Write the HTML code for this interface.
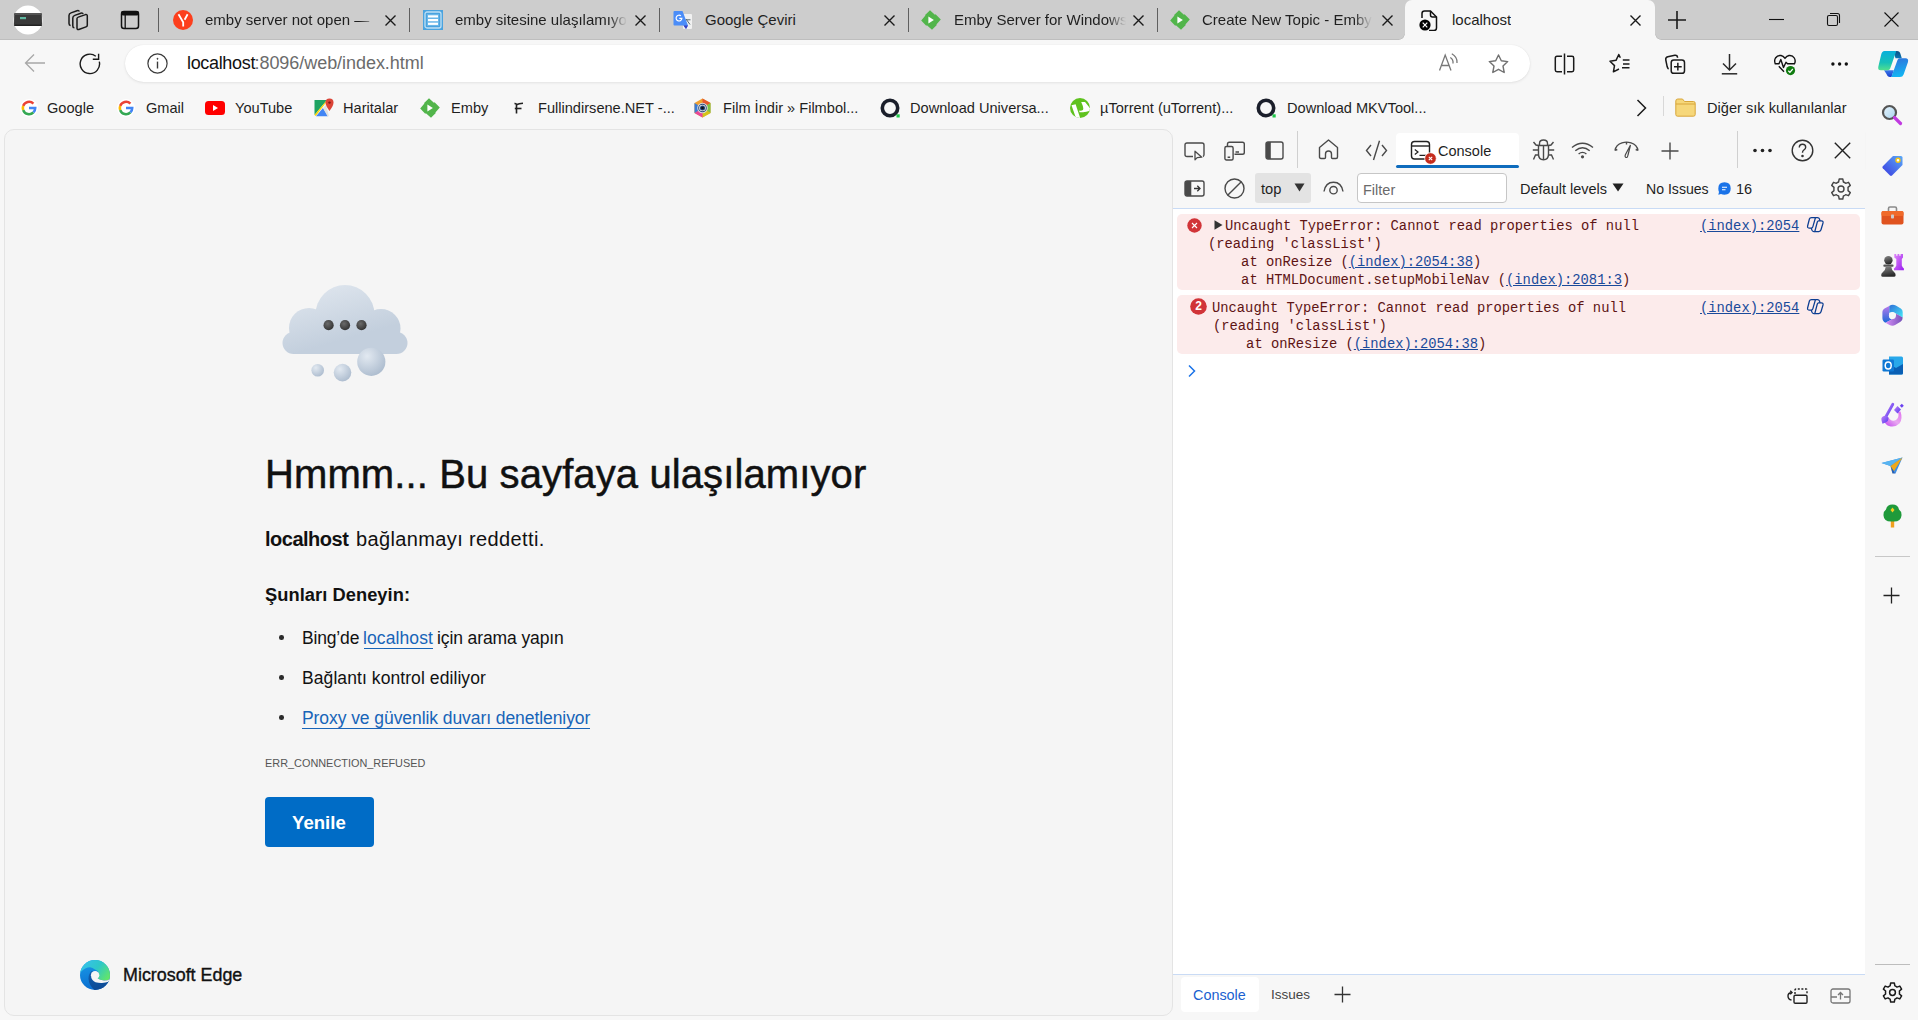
<!DOCTYPE html>
<html><head><meta charset="utf-8">
<style>
*{box-sizing:border-box;margin:0;padding:0}
html,body{width:1918px;height:1020px;overflow:hidden;background:#f7f7f7;font-family:"Liberation Sans",sans-serif;color:#1a1a1a}
.a{position:absolute}
#tabstrip{left:0;top:0;width:1918px;height:40px;background:#cdcdcd;border-bottom:1px solid #bebebe}
.tsep{position:absolute;top:8px;width:1px;height:24px;background:#5f5f5f}
.ttl{position:absolute;top:10px;font-size:15px;line-height:20px;white-space:nowrap;overflow:hidden;color:#1f1f1f}
.fade{-webkit-mask-image:linear-gradient(to right,#000 calc(100% - 18px),transparent)}
.bm{position:absolute;top:98px;font-size:14.6px;line-height:20px;white-space:nowrap;color:#1f1f1f}
#card{left:4px;top:129px;width:1169px;height:887px;background:#f5f5f5;border:1px solid #e4e4e4;border-radius:10px}
#dev{left:1173px;top:129px;width:692px;height:891px;background:#fff}
.mono{font-family:"Liberation Mono",monospace;font-size:13.8px;line-height:18px;white-space:pre}
.ui{font-size:15px;line-height:20px;white-space:nowrap;color:#1f1f1f}
</style></head><body>

<div id="tabstrip" class="a"></div>
<!-- profile -->
<svg class="a" style="left:13px;top:5px" width="30" height="30" viewBox="0 0 30 30">
 <circle cx="15" cy="15" r="14.5" fill="#fff"/>
 <path d="M1.2 9 L28.8 9 L29 19 Q29 21 27 21 L3 21 Q1 21 1 19 Z" fill="#3a3a3a"/>
 <rect x="1.2" y="8" width="27.6" height="2" fill="#555"/>
 <rect x="7" y="12" width="6" height="2.2" fill="#5fb7a0"/>
 <rect x="1.2" y="19.5" width="27.6" height="1.5" fill="#222"/>
</svg>
<!-- workspaces -->
<svg class="a" style="left:66px;top:9px" width="24" height="22" viewBox="0 0 24 22" fill="none" stroke="#1a1a1a" stroke-width="1.5" stroke-linejoin="round">
 <path d="M4.6 16.4 Q3 16.4 3 14.6 V6.5 Q3 4.6 5 3.9 L11 1.7 Q12.8 1.1 13.3 2.6"/>
 <path d="M8.4 18.8 Q6.8 18.8 6.8 17 V9 Q6.8 7.1 8.8 6.4 L14.8 4.2 Q16.6 3.6 17.1 5.1"/>
 <path d="M11 9.6 Q11 8.6 12.3 8.1 L19.5 5.6 Q21.3 5.2 21.3 7 V16.2 Q21.3 17.4 20 17.9 L12.8 20.5 Q11 21 11 19.3 Z"/>
</svg>
<!-- vertical tabs -->
<svg class="a" style="left:120px;top:10px" width="20" height="20" viewBox="0 0 20 20">
 <rect x="1.5" y="1.5" width="17" height="17" rx="2.5" fill="none" stroke="#111" stroke-width="1.5"/>
 <rect x="1" y="1" width="18" height="4.5" rx="2" fill="#111"/>
 <line x1="5.2" y1="5" x2="5.2" y2="18.5" stroke="#111" stroke-width="1.3"/>
</svg>
<div class="tsep" style="left:158px"></div>
<div class="tsep" style="left:409px"></div>
<div class="tsep" style="left:659px"></div>
<div class="tsep" style="left:908px"></div>
<div class="tsep" style="left:1157px"></div>

<!-- tab1 yandex -->
<svg class="a" style="left:173px;top:10px" width="20" height="20" viewBox="0 0 20 20"><circle cx="10" cy="10" r="10" fill="#fc3f1d"/><path d="M5.5 4.2 L10.2 12.2 V16.6 M14.6 4.2 L11.6 9.7" stroke="#fff" stroke-width="1.8" fill="none"/></svg>
<div class="ttl fade" style="left:205px;width:172px">emby server not open —</div>
<!-- tab2 -->
<svg class="a" style="left:423px;top:10px" width="20" height="20" viewBox="0 0 20 20"><rect width="20" height="20" fill="#4aa3df"/><rect x="2" y="2" width="16" height="16" rx="2" fill="none" stroke="#bfe0f5" stroke-width="1.3"/><rect x="4" y="4" width="12" height="12" fill="#6ab6e8"/><rect x="5" y="5.3" width="10" height="2.2" fill="#fff"/><rect x="5" y="9" width="10" height="2.2" fill="#fff"/><rect x="5" y="12.7" width="10" height="2.2" fill="#fff"/></svg>
<div class="ttl fade" style="left:455px;width:172px">emby sitesine ulaşılamıyor</div>
<!-- tab3 -->
<svg class="a" style="left:673px;top:10px" width="20" height="20" viewBox="0 0 20 20"><rect x="10" y="4" width="9" height="15" rx="1" fill="#f1f1f1"/><path d="M13 9 L17 14.5 M12.5 9.8 H17.5" stroke="#5a6b73" stroke-width="1" fill="none"/><path d="M1.5 1 H9.5 L15 15.5 L13 19 L10.5 15.5 H1.5 Q0.5 15.5 0.5 14.5 V2 Q0.5 1 1.5 1 Z" fill="#4b8df8"/><path d="M10.5 15.5 H15 L13 19 Z" fill="#3b3fbf"/><path d="M7.9 5.9 A2.9 2.9 0 1 0 8.9 8.3 H6.3" fill="none" stroke="#fff" stroke-width="1.2"/></svg>
<div class="ttl" style="left:705px">Google Çeviri</div>
<!-- tab4 -->
<svg class="a" style="left:921px;top:10px" width="20" height="20" viewBox="0 0 20 20"><path d="M9 0.3 L13.9 4.7 L14.6 4.2 L19.8 9.4 L15.4 14.5 L15.8 15 L11 19.8 L5.9 15.3 L5.2 15.8 L0.2 10.6 L4.4 5.5 L4.1 5.1 Z" fill="#52b54b"/><path d="M7.4 6.5 L12.9 10 L7.4 13.5 Z" fill="#fff"/></svg>
<div class="ttl fade" style="left:954px;width:172px">Emby Server for Windows</div>
<!-- tab5 -->
<svg class="a" style="left:1170px;top:10px" width="20" height="20" viewBox="0 0 20 20"><path d="M9 0.3 L13.9 4.7 L14.6 4.2 L19.8 9.4 L15.4 14.5 L15.8 15 L11 19.8 L5.9 15.3 L5.2 15.8 L0.2 10.6 L4.4 5.5 L4.1 5.1 Z" fill="#52b54b"/><path d="M7.4 6.5 L12.9 10 L7.4 13.5 Z" fill="#fff"/></svg>
<div class="ttl fade" style="left:1202px;width:170px">Create New Topic - Emby Community</div>

<!-- active tab -->
<div class="a" style="left:1405px;top:0;width:250px;height:40px;background:#f7f7f7;border-radius:7px 7px 0 0"></div>
<div class="a" style="left:1399px;top:34px;width:6px;height:6px;background:radial-gradient(circle at 0 0,#cdcdcd 4.6px,#bdbdbd 5.4px,#f7f7f7 6px)"></div>
<div class="a" style="left:1655px;top:34px;width:6px;height:6px;background:radial-gradient(circle at 100% 0,#cdcdcd 4.6px,#bdbdbd 5.4px,#f7f7f7 6px)"></div>
<svg class="a" style="left:1418px;top:9px" width="22" height="22" viewBox="0 0 22 22">
 <path d="M4 9 V4.5 Q4 2 6.5 2 H12.5 L18.5 8 V19 Q18.5 21.5 16 21.5 H11" fill="none" stroke="#111" stroke-width="1.5"/>
 <path d="M12.5 2 V6 Q12.5 8 14.5 8 H18.5" fill="none" stroke="#111" stroke-width="1.5"/>
 <circle cx="7" cy="16" r="5.6" fill="#000"/>
 <path d="M4.7 13.7 L9.3 18.3 M9.3 13.7 L4.7 18.3" stroke="#fff" stroke-width="1.2"/>
</svg>
<div class="ttl" style="left:1452px">localhost</div>

<!-- close x's -->
<svg class="a" style="left:385px;top:15px" width="11" height="11" viewBox="0 0 11 11"><path d="M0.5 0.5 L10.5 10.5 M10.5 0.5 L0.5 10.5" stroke="#1a1a1a" stroke-width="1.4"/></svg>
<svg class="a" style="left:635px;top:15px" width="11" height="11" viewBox="0 0 11 11"><path d="M0.5 0.5 L10.5 10.5 M10.5 0.5 L0.5 10.5" stroke="#1a1a1a" stroke-width="1.4"/></svg>
<svg class="a" style="left:884px;top:15px" width="11" height="11" viewBox="0 0 11 11"><path d="M0.5 0.5 L10.5 10.5 M10.5 0.5 L0.5 10.5" stroke="#1a1a1a" stroke-width="1.4"/></svg>
<svg class="a" style="left:1133px;top:15px" width="11" height="11" viewBox="0 0 11 11"><path d="M0.5 0.5 L10.5 10.5 M10.5 0.5 L0.5 10.5" stroke="#1a1a1a" stroke-width="1.4"/></svg>
<svg class="a" style="left:1382px;top:15px" width="11" height="11" viewBox="0 0 11 11"><path d="M0.5 0.5 L10.5 10.5 M10.5 0.5 L0.5 10.5" stroke="#1a1a1a" stroke-width="1.4"/></svg>
<svg class="a" style="left:1630px;top:15px" width="11" height="11" viewBox="0 0 11 11"><path d="M0.5 0.5 L10.5 10.5 M10.5 0.5 L0.5 10.5" stroke="#1a1a1a" stroke-width="1.4"/></svg>
<!-- new tab -->
<svg class="a" style="left:1668px;top:11px" width="18" height="18" viewBox="0 0 18 18"><path d="M9 0 V18 M0 9 H18" stroke="#1a1a1a" stroke-width="1.6"/></svg>
<!-- window controls -->
<svg class="a" style="left:1769px;top:18px" width="15" height="3" viewBox="0 0 15 3"><path d="M0 1.5 H15" stroke="#111" stroke-width="1.1"/></svg>
<svg class="a" style="left:1826px;top:12px" width="15" height="15" viewBox="0 0 15 15" fill="none" stroke="#111" stroke-width="1.1"><rect x="1.5" y="3.5" width="10" height="10" rx="1.5"/><path d="M4 1.5 H11.5 Q13.5 1.5 13.5 3.5 V11"/></svg>
<svg class="a" style="left:1884px;top:12px" width="15" height="15" viewBox="0 0 15 15"><path d="M0.5 0.5 L14.5 14.5 M14.5 0.5 L0.5 14.5" stroke="#111" stroke-width="1.1"/></svg>


<!-- toolbar -->
<div class="a" style="left:125px;top:45px;width:1405px;height:37px;background:#fff;border-radius:19px;box-shadow:0 0 1px rgba(0,0,0,0.10),0 1px 3px rgba(0,0,0,0.08)"></div>
<!-- back -->
<svg class="a" style="left:24px;top:53px" width="22" height="20" viewBox="0 0 22 20" fill="none" stroke="#a8a8a8" stroke-width="1.3"><path d="M21 10 H1.5 M10 1.5 L1.5 10 L10 18.5"/></svg>
<!-- refresh -->
<svg class="a" style="left:79px;top:53px" width="22" height="22" viewBox="0 0 22 22" fill="none" stroke="#1a1a1a" stroke-width="1.4"><path d="M16.8 3.2 A9.7 9.7 0 1 0 20.3 8.6"/><path d="M13.8 6.3 H19.6 V0.8"/></svg>
<!-- info -->
<svg class="a" style="left:147px;top:53px" width="21" height="21" viewBox="0 0 21 21" fill="none" stroke="#3a3a3a" stroke-width="1.2"><circle cx="10.5" cy="10.5" r="9.6"/><path d="M10.5 8.6 V15.5" stroke-width="1.4"/><circle cx="10.5" cy="5.8" r="0.5" fill="#3a3a3a" stroke-width="1"/></svg>
<!-- read aloud -->
<svg class="a" style="left:1439px;top:53px" width="21" height="20" viewBox="0 0 21 20" fill="none" stroke="#777" stroke-width="1.3"><path d="M0.5 17.5 L6.2 2 L12 17.5 M2.3 12.5 H10"/><path d="M11.3 4.5 Q14.5 6.5 14 10.5"/><path d="M12.8 0.8 Q18.6 4 18 10"/></svg>
<!-- star -->
<svg class="a" style="left:1488px;top:54px" width="21" height="20" viewBox="0 0 21 20" fill="none" stroke="#707070" stroke-width="1.4" stroke-linejoin="round"><path d="M10.5 1 L13.3 6.8 L19.7 7.6 L15 12 L16.2 18.5 L10.5 15.3 L4.8 18.5 L6 12 L1.3 7.6 L7.7 6.8 Z"/></svg>
<!-- split -->
<svg class="a" style="left:1554px;top:53px" width="21" height="22" viewBox="0 0 21 22" fill="none" stroke="#1a1a1a" stroke-width="1.5"><path d="M8 3.3 H3 Q1.3 3.3 1.3 5 V17 Q1.3 18.7 3 18.7 H8"/><path d="M13 3.3 H18 Q19.7 3.3 19.7 5 V17 Q19.7 18.7 18 18.7 H13"/><path d="M10.5 0.5 V21.5"/></svg>
<!-- favorites -->
<svg class="a" style="left:1609px;top:53px" width="22" height="21" viewBox="0 0 22 21" fill="none" stroke="#1a1a1a" stroke-width="1.5" stroke-linejoin="round"><path d="M11.3 4.8 L9.8 1.5 L7 7.3 L1 8.2 L5.5 12.6 L4.4 18.8 L10 16"/><path d="M13.8 7 H20.5 M14 11 H20.5 M13 14.8 H20.5" stroke-width="1.6"/></svg>
<!-- collections -->
<svg class="a" style="left:1664px;top:53px" width="22" height="22" viewBox="0 0 22 22" fill="none" stroke="#1a1a1a" stroke-width="1.5"><path d="M13.6 4.8 Q13.3 1.8 10.8 2.2 L3.8 3.8 Q1.3 4.4 1.8 7 L3.2 13.8 Q3.6 15.4 4.6 16"/><rect x="7.2" y="7" width="13.3" height="13.3" rx="2.6"/><path d="M13.85 9.8 V17.5 M10 13.65 H17.7"/></svg>
<!-- download -->
<svg class="a" style="left:1721px;top:53px" width="17" height="22" viewBox="0 0 17 22" fill="none" stroke="#2a2a2a" stroke-width="1.5"><path d="M8.5 1 V16.5 M2 10.5 L8.5 17 L15 10.5"/><path d="M0.8 20.8 H16.2"/></svg>
<!-- health -->
<svg class="a" style="left:1774px;top:54px" width="22" height="22" viewBox="0 0 22 22"><path d="M1.2 9.5 Q0 6.5 1.5 4 Q3.5 1 7 1.5 Q9.2 2 11 4.2 Q12.8 2 15 1.5 Q18.5 1 20.3 4 Q21.8 6.5 20.7 9.5" fill="none" stroke="#111" stroke-width="1.4"/><path d="M0.7 9.8 H5 L6.8 5.5 L9.5 13.5 L12 8.3 L13.5 9.8 H21" fill="none" stroke="#111" stroke-width="1.4" stroke-linejoin="round"/><path d="M4.8 12.3 L10 17.8" stroke="#111" stroke-width="1.4"/><circle cx="16.5" cy="16.6" r="4.6" fill="#107c10"/><path d="M14.3 16.8 L15.9 18.3 L18.8 15" fill="none" stroke="#fff" stroke-width="1.2"/></svg>
<!-- more -->
<svg class="a" style="left:1831px;top:62px" width="18" height="4" viewBox="0 0 18 4" fill="#111"><circle cx="1.9" cy="2" r="1.7"/><circle cx="8.6" cy="2" r="1.7"/><circle cx="15.3" cy="2" r="1.7"/></svg>
<!-- copilot -->
<svg class="a" style="left:1874px;top:46px" width="40" height="36" viewBox="0 0 40 36">
 <defs>
  <linearGradient id="cpA" x1="0" y1="0" x2="0" y2="1"><stop offset="0" stop-color="#08b0dc"/><stop offset="0.6" stop-color="#17c0b8"/><stop offset="1" stop-color="#52e08e"/></linearGradient>
  <linearGradient id="cpB" x1="0.3" y1="0" x2="0.5" y2="1"><stop offset="0" stop-color="#2e74dc"/><stop offset="1" stop-color="#12b8f4"/></linearGradient>
  <linearGradient id="cpC" x1="0" y1="0" x2="0" y2="1"><stop offset="0" stop-color="#0b4f82"/><stop offset="1" stop-color="#0a76b5"/></linearGradient>
  <linearGradient id="cpD" x1="0" y1="0" x2="0" y2="1"><stop offset="0" stop-color="#3a78e8"/><stop offset="1" stop-color="#1a3fd0"/></linearGradient>
 </defs>
 <path d="M19.5 5 H23 Q25.8 5 26.5 8 L27.8 12.3 H21.5 Z" fill="url(#cpC)"/>
 <path d="M10 24.3 H19.8 L17.5 31 H16 Q13.5 31 12.5 28 Z" fill="url(#cpD)"/>
 <path d="M10.5 5 H22.3 L16.2 22.5 Q15.6 24.3 13.8 24.3 H6.8 Q3.6 24.3 4.3 20.8 L7.2 8.6 Q8 5 10.5 5 Z" fill="url(#cpA)"/>
 <path d="M25.6 12.3 H31.5 Q34.8 12.3 34 16 L29.6 28.4 Q28.7 31 26 31 H17.3 L23.5 14 Q24.2 12.3 25.6 12.3 Z" fill="url(#cpB)"/>
</svg>

<div class="a" style="left:187px;top:52px;font-size:18px;line-height:22px;color:#111;white-space:nowrap;letter-spacing:-0.33px">localhost</div><div class="a" style="left:254.5px;top:52px;font-size:18px;line-height:22px;color:#6b6b6b;white-space:nowrap;letter-spacing:-0.05px">:8096/web/index.html</div>


<!-- bookmarks -->
<svg class="a" style="left:20px;top:99px" width="18" height="18" viewBox="0 0 18 18"><circle cx="9" cy="9" r="9" fill="#fff"/><g fill="none" stroke-width="2.6"><path d="M13.4 4.6 A6.2 6.2 0 0 0 3.2 6.9" stroke="#ea4335"/><path d="M3.2 6.9 A6.2 6.2 0 0 0 3.2 11.1" stroke="#fbbc05"/><path d="M3.2 11.1 A6.2 6.2 0 0 0 13.4 13.4" stroke="#34a853"/><path d="M13.4 13.4 A6.2 6.2 0 0 0 15.2 9 H9" stroke="#4285f4"/></g></svg>
<div class="bm" style="left:47px">Google</div>
<svg class="a" style="left:117px;top:99px" width="18" height="18" viewBox="0 0 18 18"><circle cx="9" cy="9" r="9" fill="#fff"/><g fill="none" stroke-width="2.6"><path d="M13.4 4.6 A6.2 6.2 0 0 0 3.2 6.9" stroke="#ea4335"/><path d="M3.2 6.9 A6.2 6.2 0 0 0 3.2 11.1" stroke="#fbbc05"/><path d="M3.2 11.1 A6.2 6.2 0 0 0 13.4 13.4" stroke="#34a853"/><path d="M13.4 13.4 A6.2 6.2 0 0 0 15.2 9 H9" stroke="#4285f4"/></g></svg>
<div class="bm" style="left:146px">Gmail</div>
<svg class="a" style="left:205px;top:101px" width="20" height="14" viewBox="0 0 20 14"><rect width="20" height="14" rx="3.5" fill="#f00"/><path d="M8 4 L13 7 L8 10 Z" fill="#fff"/></svg>
<div class="bm" style="left:235px">YouTube</div>
<svg class="a" style="left:314px;top:98px" width="20" height="19" viewBox="0 0 20 19"><path d="M0.5 2 H13 L0.5 17 Z" fill="#1ea362"/><path d="M0.5 17 L13 2 H14 L1.8 18 Z" fill="#ffd400"/><path d="M2 18.3 L9 10 L14 18.3 Z" fill="#4285f4"/><path d="M13.5 18.3 L9 10 L12 7 L15 18.3Z" fill="#e0e0e0"/><path d="M15.5 0.5 Q19.5 0.5 19.5 4.5 Q19.5 7.5 15.5 13 Q11.5 7.5 11.5 4.5 Q11.5 0.5 15.5 0.5Z" fill="#db4437"/><circle cx="15.5" cy="4.6" r="1.2" fill="#7a1a12"/></svg>
<div class="bm" style="left:343px">Haritalar</div>
<svg class="a" style="left:420px;top:98px" width="20" height="20" viewBox="0 0 20 20"><path d="M9 0.3 L13.9 4.7 L14.6 4.2 L19.8 9.4 L15.4 14.5 L15.8 15 L11 19.8 L5.9 15.3 L5.2 15.8 L0.2 10.6 L4.4 5.5 L4.1 5.1 Z" fill="#52b54b"/><path d="M7.4 6.5 L12.9 10 L7.4 13.5 Z" fill="#fff"/></svg>
<div class="bm" style="left:451px">Emby</div>
<svg class="a" style="left:513px;top:102px" width="11" height="12" viewBox="0 0 11 12" fill="none" stroke="#222" stroke-width="1.6"><path d="M3.5 11.5 V3 Q3.5 1.3 1.5 1.6"/><path d="M3.2 2.8 Q6 1.5 10 1.2"/><path d="M1.8 6.5 H8.5"/></svg>
<div class="bm" style="left:538px">Fullindirsene.NET -...</div>
<svg class="a" style="left:693px;top:98px" width="19" height="20" viewBox="0 0 19 20"><path d="M9.5 0.5 L17.5 5 V15 L9.5 19.5 L1.5 15 V5 Z" fill="#f0a030"/><path d="M9.5 0.5 L17.5 5 L9.5 10Z" fill="#e4572e"/><path d="M17.5 5 V15 L9.5 10Z" fill="#7cc242"/><path d="M17.5 15 L9.5 19.5 L9.5 10Z" fill="#d4c41a"/><path d="M9.5 19.5 L1.5 15 L9.5 10Z" fill="#e8479a"/><path d="M1.5 15 V5 L9.5 10Z" fill="#3a7bd5"/><circle cx="9.5" cy="10" r="5.3" fill="#ddd"/><circle cx="9.5" cy="10" r="4.3" fill="#2a4a7a"/><circle cx="9.5" cy="10" r="3.3" fill="#eee"/><circle cx="9.5" cy="10" r="2.5" fill="#1c3f74"/><circle cx="9.5" cy="10" r="1.3" fill="#111"/></svg>
<div class="bm" style="left:723px">Film İndir » Filmbol...</div>
<svg class="a" style="left:880px;top:98px" width="21" height="21" viewBox="0 0 21 21"><circle cx="10" cy="10" r="7.7" fill="none" stroke="#1b1f2b" stroke-width="3.6"/><rect x="16.5" y="16.3" width="3.2" height="3.2" fill="#20c84a"/></svg>
<div class="bm" style="left:910px">Download Universa...</div>
<svg class="a" style="left:1070px;top:98px" width="20" height="20" viewBox="0 0 20 20"><defs><clipPath id="utc"><circle cx="10" cy="10" r="10"/></clipPath></defs><circle cx="10" cy="10" r="10" fill="#5fc21e"/><g clip-path="url(#utc)" fill="#fff"><path d="M1.5 7.2 L5.6 6.2 L10.5 21 L6.3 21 Z"/><path d="M11.2 4 L15 4 Q17.5 7 20.5 10.8 L20.5 12.6 Q16.5 13.8 13 14.2 L9.6 14.3 L9 12.6 Q11.6 13.2 12.9 12 Q14.2 10.3 11.2 4 Z"/></g></svg>
<div class="bm" style="left:1100px">µTorrent (uTorrent)...</div>
<svg class="a" style="left:1256px;top:98px" width="21" height="21" viewBox="0 0 21 21"><circle cx="10" cy="10" r="7.7" fill="none" stroke="#1b1f2b" stroke-width="3.6"/><rect x="16.5" y="16.3" width="3.2" height="3.2" fill="#20c84a"/></svg>
<div class="bm" style="left:1287px">Download MKVTool...</div>
<svg class="a" style="left:1636px;top:99px" width="11" height="18" viewBox="0 0 11 18"><path d="M1.5 1 L9.5 9 L1.5 17" fill="none" stroke="#1a1a1a" stroke-width="1.5"/></svg>
<div class="a" style="left:1663px;top:96px;width:1px;height:20px;background:#d8d8d8"></div>
<svg class="a" style="left:1675px;top:98px" width="21" height="19" viewBox="0 0 21 19"><path d="M0.8 3 Q0.8 1 2.8 1 H7.5 L9.5 3.5 H18.5 Q20.2 3.5 20.2 5.3 V16.5 Q20.2 18.2 18.5 18.2 H2.5 Q0.8 18.2 0.8 16.5 Z" fill="#f6d77a" stroke="#d8a63a" stroke-width="1"/><path d="M0.8 6 H20.2" stroke="#d8a63a" stroke-width="1"/></svg>
<div class="bm" style="left:1707px">Diğer sık kullanılanlar</div>

<!-- page card -->
<div id="card" class="a"></div>
<div class="a" style="left:265px;top:446px;font-size:40px;line-height:56px;color:#111;white-space:nowrap;letter-spacing:0.11px;-webkit-text-stroke:0.5px #111">Hmmm... Bu sayfaya ulaşılamıyor</div>
<div class="a" style="left:265px;top:526px;font-size:20px;line-height:26px;color:#111;white-space:nowrap;font-weight:bold;letter-spacing:-0.5px">localhost</div>
<div class="a" style="left:356px;top:526px;font-size:20px;line-height:26px;color:#111;white-space:nowrap;letter-spacing:0.37px">bağlanmayı reddetti.</div>
<div class="a" style="left:265px;top:582px;font-size:18.3px;line-height:26px;font-weight:bold;color:#111;white-space:nowrap;letter-spacing:0.05px">Şunları Deneyin:</div>
<div class="a" style="left:302px;top:625px;font-size:17.5px;line-height:26px;color:#111;white-space:nowrap;letter-spacing:-0.17px">Bing’de</div>
<div class="a" style="left:363px;top:625px;font-size:17.5px;line-height:26px;color:#1764b8;white-space:nowrap;letter-spacing:0.1px">localhost</div>
<div class="a" style="left:364px;top:648px;width:69px;height:1px;background:#1764b8"></div>
<div class="a" style="left:437px;top:625px;font-size:17.5px;line-height:26px;color:#111;white-space:nowrap;letter-spacing:-0.11px">için arama yapın</div>
<div class="a" style="left:302px;top:665px;font-size:17.5px;line-height:26px;color:#111;white-space:nowrap;letter-spacing:0.08px">Bağlantı kontrol ediliyor</div>
<div class="a" style="left:302px;top:705px;font-size:17.5px;line-height:26px;color:#1764b8;white-space:nowrap;letter-spacing:-0.07px">Proxy ve güvenlik duvarı denetleniyor</div>
<div class="a" style="left:302px;top:728px;width:288px;height:1px;background:#1764b8"></div>
<div class="a" style="left:279.3px;top:635.3px;width:4.6px;height:4.6px;border-radius:50%;background:#2a2a2a"></div>
<div class="a" style="left:279.3px;top:675.3px;width:4.6px;height:4.6px;border-radius:50%;background:#2a2a2a"></div>
<div class="a" style="left:279.3px;top:715.3px;width:4.6px;height:4.6px;border-radius:50%;background:#2a2a2a"></div>
<div class="a" style="left:265px;top:755px;font-size:10.9px;line-height:16px;color:#555;white-space:nowrap">ERR_CONNECTION_REFUSED</div>
<div class="a" style="left:265px;top:797px;width:109px;height:50px;background:#006cc6;border-radius:4px"></div>
<div class="a" style="left:292px;top:811px;font-size:18.6px;line-height:24px;font-weight:bold;color:#fff;white-space:nowrap">Yenile</div>

<!-- cloud -->
<svg class="a" style="left:270px;top:275px" width="150" height="115" viewBox="0 0 150 115">
 <defs>
  <linearGradient id="cl" x1="0" y1="10" x2="20" y2="80" gradientUnits="userSpaceOnUse"><stop offset="0" stop-color="#e4eaf1"/><stop offset="1" stop-color="#c3cfdd"/></linearGradient>
  <radialGradient id="bb" cx="0.35" cy="0.3" r="0.8"><stop offset="0" stop-color="#e2e9f1"/><stop offset="1" stop-color="#a9b9cc"/></radialGradient>
  <radialGradient id="dt" cx="0.4" cy="0.35" r="0.7"><stop offset="0" stop-color="#6a6a6a"/><stop offset="1" stop-color="#303030"/></radialGradient>
  <filter id="blr" x="-10%" y="-10%" width="120%" height="120%"><feGaussianBlur stdDeviation="0.6"/></filter>
 </defs>
 <g fill="url(#cl)" filter="url(#blr)">
  <rect x="12.5" y="57" width="125" height="22" rx="11"/>
  <circle cx="39" cy="53" r="20"/>
  <circle cx="75" cy="39.5" r="29.5"/>
  <circle cx="111" cy="53.5" r="19.5"/>
 </g>
 <circle cx="58.6" cy="50.2" r="5.1" fill="url(#dt)"/>
 <circle cx="75" cy="50.2" r="5.1" fill="url(#dt)"/>
 <circle cx="91.5" cy="50.2" r="5.1" fill="url(#dt)"/>
 <circle cx="101.3" cy="86.8" r="14.1" fill="url(#bb)" filter="url(#blr)"/>
 <circle cx="72.5" cy="97.6" r="8.8" fill="url(#bb)" filter="url(#blr)"/>
 <circle cx="47.7" cy="95.3" r="6.3" fill="url(#bb)" filter="url(#blr)"/>
</svg>
<!-- edge logo -->
<svg class="a" style="left:80px;top:960px" width="30" height="30" viewBox="0 0 30 30">
 <defs>
  <clipPath id="ecp"><circle cx="15" cy="15" r="15"/></clipPath>
  <linearGradient id="eg1" x1="0" y1="0" x2="0.2" y2="1"><stop offset="0" stop-color="#1a9ce8"/><stop offset="1" stop-color="#0b6fd0"/></linearGradient>
  <linearGradient id="eg2" x1="0" y1="0.2" x2="1" y2="0.7"><stop offset="0" stop-color="#38c0f0"/><stop offset="0.55" stop-color="#2ec8c8"/><stop offset="1" stop-color="#62e56a"/></linearGradient>
  <linearGradient id="eg3" x1="0" y1="0" x2="0.3" y2="1"><stop offset="0" stop-color="#0f5fb0"/><stop offset="1" stop-color="#0e4a94"/></linearGradient>
 </defs>
 <g clip-path="url(#ecp)">
  <rect width="30" height="30" fill="url(#eg1)"/>
  <path d="M11.6 11 Q8.6 13.5 8.5 18.5 Q8.8 25.5 15 30.5 H31 V20 Z" fill="url(#eg3)"/>
  <path d="M-1 -1 H31 V18.2 Q28 20.6 24 20.4 Q20 20.1 17.6 18.6 Q19.4 16 18.8 13 Q17.8 10.2 15 9.6 Q12.5 7.6 10.2 7.2 Q5 7.3 0.8 12 L-1 13 Z" fill="url(#eg2)"/>
  <path d="M11 16.5 Q11.8 20.8 15.5 22.2 Q19 23.2 22 23 Q25.5 22.8 28.6 21.8 L31 20 V18.2 Q28 20.6 24 20.4 Q20 20.1 17.6 18.6 Q14 19.5 12 17.5 Z" fill="#f5f5f5"/>
  <circle cx="15.1" cy="15.3" r="4.2" fill="#f5f5f5"/>
 </g>
</svg>
<div class="a" style="left:123px;top:963px;font-size:17.9px;line-height:24px;color:#111;white-space:nowrap;-webkit-text-stroke:0.35px #111">Microsoft Edge</div>

<!-- devtools -->
<div id="dev" class="a"></div>
<div class="a" style="left:1173px;top:129px;width:692px;height:40px;background:#f7f7f7;box-shadow:0 2px 2px -1px rgba(0,0,0,0.12)"></div>
<div class="a" style="left:1173px;top:169px;width:692px;height:40px;background:#f7f7f7;border-bottom:1px solid #c9dbf5"></div>
<!-- toolbar1 icons -->
<svg class="a" style="left:1184px;top:142px" width="22" height="19" viewBox="0 0 22 19" fill="none" stroke="#4a4a4a" stroke-width="1.4"><path d="M9 14.5 H3 Q1 14.5 1 12.5 V3 Q1 1 3 1 H18 Q20 1 20 3 V12.5 Q20 14 19 14.5"/><path d="M11 9.2 L11 17.8 L13.2 15.6 L17.8 15.2 Z" stroke-linejoin="round" fill="#f7f7f7" stroke-width="1.3"/></svg>
<svg class="a" style="left:1224px;top:141px" width="22" height="20" viewBox="0 0 22 20" fill="none" stroke="#4a4a4a" stroke-width="1.4"><path d="M3.5 5.5 V3 Q3.5 1.2 5.3 1.2 H18.5 Q20.3 1.2 20.3 3 V11.5 Q20.3 13.3 18.5 13.3 H10.5"/><rect x="0.9" y="5.5" width="8.2" height="13.5" rx="1.5"/><path d="M3.6 16.2 H6.2 M11.5 11 H15"/></svg>
<svg class="a" style="left:1265px;top:141px" width="19" height="19" viewBox="0 0 19 19"><rect x="1" y="1" width="17" height="17" rx="2" fill="none" stroke="#4a4a4a" stroke-width="1.4"/><path d="M3 1 H5.8 V18 H3 Q1 18 1 16 V3 Q1 1 3 1Z" fill="#4a4a4a"/></svg>
<div class="a" style="left:1297px;top:131px;width:1px;height:37px;background:#d0d0d0"></div>
<svg class="a" style="left:1318px;top:139px" width="21" height="21" viewBox="0 0 21 21" fill="none" stroke="#4a4a4a" stroke-width="1.4" stroke-linejoin="round"><path d="M1.5 8.5 L10.5 1 L19.5 8.5 V18 Q19.5 19.5 18 19.5 H14.5 Q13.5 19.5 13.5 18.5 V15 Q13.5 12 10.5 12 Q7.5 12 7.5 15 V18.5 Q7.5 19.5 6.5 19.5 H3 Q1.5 19.5 1.5 18 Z"/></svg>
<svg class="a" style="left:1365px;top:140px" width="23" height="21" viewBox="0 0 23 21" fill="none" stroke="#4a4a4a" stroke-width="1.4"><path d="M6 5 L1.5 10.5 L6 16 M17 5 L21.5 10.5 L17 16 M14.5 0.8 L8.5 20"/></svg>
<div class="a" style="left:1396px;top:133px;width:123px;height:35px;background:#fff;border-radius:4px 4px 0 0"></div>
<div class="a" style="left:1396px;top:165px;width:123px;height:3px;background:#0f6cbd;border-radius:2px"></div>
<svg class="a" style="left:1410px;top:140px" width="27" height="25" viewBox="0 0 27 25"><rect x="1.5" y="1.5" width="18" height="17.5" rx="3" fill="none" stroke="#222" stroke-width="1.4"/><path d="M1.5 6 H19.5" stroke="#222" stroke-width="1.4"/><path d="M4.8 9.5 L8 12 L4.8 14.5 M9.5 15.3 H16" fill="none" stroke="#222" stroke-width="1.2"/><circle cx="20.5" cy="18.5" r="5.8" fill="#c42b1c" stroke="#fff" stroke-width="0.8"/><path d="M18.8 16.8 L22.2 20.2 M22.2 16.8 L18.8 20.2" stroke="#fff" stroke-width="1.1"/></svg>
<div class="ui a" style="left:1438px;top:141px;font-size:14.5px">Console</div>
<svg class="a" style="left:1532px;top:139px" width="23" height="22" viewBox="0 0 23 22" fill="none" stroke="#4a4a4a" stroke-width="1.4"><path d="M7.5 6 V4.5 Q7.5 1 11.5 1 Q15.5 1 15.5 4.5 V6"/><path d="M6.5 6.5 H16.5 V15 Q16.5 20.8 11.5 20.8 Q6.5 20.8 6.5 15 Z"/><path d="M11.5 7 V20.5 M1.5 3 L4 6 L6.5 6.5 M21.5 3 L19 6 L16.5 6.5 M0.8 11 H6.5 M16.5 11 H22.2 M1.5 20.5 L3.5 16 H6.5 M21.5 20.5 L19.5 16 H16.5"/></svg>
<svg class="a" style="left:1571px;top:142px" width="23" height="17" viewBox="0 0 23 17" fill="none" stroke="#4a4a4a" stroke-width="1.4"><path d="M1 5.5 Q11.5 -3 22 5.5"/><path d="M4.3 8.8 Q11.5 2.5 18.7 8.8"/><path d="M7.6 12 Q11.5 8.8 15.4 12"/><circle cx="11.5" cy="14.8" r="1.6" fill="#4a4a4a" stroke="none"/></svg>
<svg class="a" style="left:1614px;top:141px" width="25" height="17" viewBox="0 0 25 17" fill="none" stroke="#4a4a4a" stroke-width="1.4"><path d="M1 9.5 Q2 3.5 8 1.8 Q12.5 0.5 17 1.8 Q23 3.5 24 9.5"/><path d="M1.2 9.3 L3.3 8.5 M23.8 9.3 L21.7 8.5 M12.5 1 V3.5"/><path d="M16.5 4 L11.5 13.5 Q10.5 16 12 16.5 Q13.5 16.8 14 14 Z" stroke-width="1.2"/></svg>
<svg class="a" style="left:1661px;top:142px" width="18" height="18" viewBox="0 0 18 18"><path d="M9 0.5 V17.5 M0.5 9 H17.5" stroke="#4a4a4a" stroke-width="1.4"/></svg>
<div class="a" style="left:1737px;top:131px;width:1px;height:37px;background:#d0d0d0"></div>
<svg class="a" style="left:1753px;top:148px" width="20" height="5" viewBox="0 0 20 5" fill="#222"><circle cx="2" cy="2.5" r="1.8"/><circle cx="9.5" cy="2.5" r="1.8"/><circle cx="17" cy="2.5" r="1.8"/></svg>
<svg class="a" style="left:1791px;top:139px" width="23" height="23" viewBox="0 0 23 23" fill="none" stroke="#333" stroke-width="1.4"><circle cx="11.5" cy="11.5" r="10.3"/><path d="M8.3 8.5 Q8.3 5.3 11.5 5.3 Q14.7 5.3 14.7 8.3 Q14.7 10.3 12.5 11.3 Q11.5 11.8 11.5 13.8"/><circle cx="11.5" cy="17" r="0.6" fill="#333"/></svg>
<svg class="a" style="left:1834px;top:142px" width="17" height="17" viewBox="0 0 17 17"><path d="M0.8 0.8 L16.2 16.2 M16.2 0.8 L0.8 16.2" stroke="#222" stroke-width="1.4"/></svg>
<!-- toolbar2 -->
<svg class="a" style="left:1184px;top:180px" width="21" height="17" viewBox="0 0 21 17"><rect x="1" y="1" width="19" height="15" rx="2" fill="none" stroke="#4a4a4a" stroke-width="1.4"/><path d="M3 1 H7.3 V16 H3 Q1 16 1 14 V3 Q1 1 3 1Z" fill="#4a4a4a"/><path d="M10 8.5 H16 M13.3 5.8 L16 8.5 L13.3 11.2" fill="none" stroke="#333" stroke-width="1.3"/></svg>
<svg class="a" style="left:1224px;top:178px" width="21" height="21" viewBox="0 0 21 21" fill="none" stroke="#4a4a4a" stroke-width="1.4"><circle cx="10.5" cy="10.5" r="9.5"/><path d="M17.3 3.7 L3.7 17.3"/></svg>
<div class="a" style="left:1255px;top:173px;width:56px;height:30px;background:#e3e3e3;border-radius:3px"></div>
<div class="ui a" style="left:1261px;top:179px;font-size:14.7px">top</div>
<svg class="a" style="left:1294px;top:183px" width="11" height="9" viewBox="0 0 11 9"><path d="M0.5 0.5 H10.5 L5.5 8.5Z" fill="#333"/></svg>
<svg class="a" style="left:1323px;top:181px" width="21" height="15" viewBox="0 0 21 15" fill="none" stroke="#4a4a4a" stroke-width="1.4"><path d="M1 10.5 Q2.5 1.2 10.5 1.2 Q18.5 1.2 20 10.5"/><circle cx="10.5" cy="9.2" r="3.7"/></svg>
<div class="a" style="left:1357px;top:173px;width:150px;height:30px;background:#fff;border:1px solid #c6c6c6;border-radius:4px"></div>
<div class="ui a" style="left:1363px;top:180px;font-size:14.5px;color:#6b6b6b">Filter</div>
<div class="ui a" style="left:1520px;top:179px;font-size:14.5px">Default levels</div>
<svg class="a" style="left:1612px;top:183px" width="12" height="9" viewBox="0 0 12 9"><path d="M0.5 0.5 H11.5 L6 8.5Z" fill="#222"/></svg>
<div class="ui a" style="left:1646px;top:179px;font-size:14.1px">No Issues</div>
<svg class="a" style="left:1718px;top:182px" width="13" height="13" viewBox="0 0 13 13"><path d="M6.5 0.3 Q12.7 0.3 12.7 6.5 Q12.7 12.7 6.5 12.7 Q4.5 12.7 3 12 L0.3 12.7 L1 10 Q0.3 8.5 0.3 6.5 Q0.3 0.3 6.5 0.3Z" fill="#1a73e8"/><path d="M4 5.3 H9 M4 7.8 H7.5" stroke="#fff" stroke-width="1.1"/></svg>
<div class="ui a" style="left:1736px;top:179px;font-size:14.5px">16</div>
<svg class="a" style="left:1830px;top:178px" width="22" height="22" viewBox="0 0 22 22" fill="none" stroke="#444" stroke-width="1.4" stroke-linejoin="round"><path d="M9.2 1 H12.8 L13.4 4 Q14.6 4.5 15.6 5.3 L18.5 4.3 L20.3 7.4 L18 9.4 Q18.2 11 18 12.6 L20.3 14.6 L18.5 17.7 L15.6 16.7 Q14.6 17.5 13.4 18 L12.8 21 H9.2 L8.6 18 Q7.4 17.5 6.4 16.7 L3.5 17.7 L1.7 14.6 L4 12.6 Q3.8 11 4 9.4 L1.7 7.4 L3.5 4.3 L6.4 5.3 Q7.4 4.5 8.6 4 Z"/><circle cx="11" cy="11" r="3"/></svg>

<!-- console messages -->
<div class="a" style="left:1177px;top:214px;width:683px;height:76px;background:#fcebeb;border-radius:5px"></div>
<div class="a" style="left:1177px;top:295px;width:683px;height:59px;background:#fcebeb;border-radius:5px"></div>
<svg class="a" style="left:1187px;top:218px" width="15" height="15" viewBox="0 0 15 15"><circle cx="7.5" cy="7.5" r="7.2" fill="#d13438"/><path d="M5 5 L10 10 M10 5 L5 10" stroke="#fff" stroke-width="1.1"/></svg>
<svg class="a" style="left:1214px;top:220px" width="9" height="10" viewBox="0 0 9 10"><path d="M0.5 0.3 L8.5 5 L0.5 9.7Z" fill="#333"/></svg>
<div class="mono a" style="left:1225px;top:218px;color:#5e1414">Uncaught TypeError: Cannot read properties of null</div>
<div class="mono a" style="left:1208px;top:236px;color:#5e1414">(reading 'classList')</div>
<div class="mono a" style="left:1208px;top:254px;color:#5e1414">    at onResize (<span style="color:#1a4a9a;text-decoration:underline">(index):2054:38</span>)</div>
<div class="mono a" style="left:1208px;top:272px;color:#5e1414">    at HTMLDocument.setupMobileNav (<span style="color:#1a4a9a;text-decoration:underline">(index):2081:3</span>)</div>
<div class="mono a" style="left:1700px;top:218px;color:#1a4a9a;text-decoration:underline">(index):2054</div>
<svg class="a" style="left:1190px;top:298px" width="17" height="17" viewBox="0 0 17 17"><circle cx="8.5" cy="8.5" r="8.3" fill="#d13438"/></svg>
<div class="a" style="left:1190px;top:298px;width:17px;height:17px;font-size:12px;line-height:17px;text-align:center;color:#fff;font-weight:bold">2</div>
<div class="mono a" style="left:1212px;top:300px;color:#5e1414">Uncaught TypeError: Cannot read properties of null</div>
<div class="mono a" style="left:1213px;top:318px;color:#5e1414">(reading 'classList')</div>
<div class="mono a" style="left:1213px;top:336px;color:#5e1414">    at onResize (<span style="color:#1a4a9a;text-decoration:underline">(index):2054:38</span>)</div>
<div class="mono a" style="left:1700px;top:300px;color:#1a4a9a;text-decoration:underline">(index):2054</div>
<svg class="a" style="left:1800px;top:212px" width="30" height="24" viewBox="0 0 30 24" fill="none" stroke="#0b3d91" stroke-width="1.25" stroke-linejoin="round"><path d="M11.5 5.5 H15.5 L12.8 14.8 Q12.5 16 11.3 16 H9 Q7.2 16 7.6 14 L9.4 7 Q9.8 5.5 11.5 5.5 Z"/><path d="M18.5 8.8 H21.3 Q23.5 8.8 23 11 L21 17.8 Q20.5 19.5 18.8 19.5 H14.8 L17.3 10 Q17.7 8.8 18.5 8.8 Z"/><path d="M15.5 5.5 H17.5 Q19 5.5 19.5 7 L20 8.8 M11.3 16 L11.8 17.8 Q12.3 19.5 13.8 19.5 H14.8"/></svg>
<svg class="a" style="left:1800px;top:294px" width="30" height="24" viewBox="0 0 30 24" fill="none" stroke="#0b3d91" stroke-width="1.25" stroke-linejoin="round"><path d="M11.5 5.5 H15.5 L12.8 14.8 Q12.5 16 11.3 16 H9 Q7.2 16 7.6 14 L9.4 7 Q9.8 5.5 11.5 5.5 Z"/><path d="M18.5 8.8 H21.3 Q23.5 8.8 23 11 L21 17.8 Q20.5 19.5 18.8 19.5 H14.8 L17.3 10 Q17.7 8.8 18.5 8.8 Z"/><path d="M15.5 5.5 H17.5 Q19 5.5 19.5 7 L20 8.8 M11.3 16 L11.8 17.8 Q12.3 19.5 13.8 19.5 H14.8"/></svg>
<svg class="a" style="left:1187px;top:364px" width="10" height="14" viewBox="0 0 10 14"><path d="M2 1.5 L7.5 7 L2 12.5" fill="none" stroke="#1a73e8" stroke-width="1.5"/></svg>

<!-- drawer -->
<div class="a" style="left:1173px;top:974px;width:692px;height:46px;background:#f7f7f7;border-top:1px solid #c9dbf5"></div>
<div class="a" style="left:1181px;top:977px;width:78px;height:35px;background:#fff;border-radius:4px"></div>
<div class="ui a" style="left:1193px;top:985px;font-size:14.4px;color:#1a5fd0">Console</div>
<div class="ui a" style="left:1271px;top:985px;font-size:13.5px;color:#444">Issues</div>
<svg class="a" style="left:1334px;top:986px" width="17" height="17" viewBox="0 0 17 17"><path d="M8.5 0.5 V16.5 M0.5 8.5 H16.5" stroke="#333" stroke-width="1.3"/></svg>
<svg class="a" style="left:1787px;top:988px" width="21" height="16" viewBox="0 0 21 16" fill="none" stroke="#222" stroke-width="1.4"><path d="M4.5 12 Q1 11.5 1 8 Q1 5 4.5 4.5 M3.2 2.8 L5 4.5 L3.2 6.3"/><rect x="7" y="7.2" width="13" height="8" rx="1.2"/><path d="M8 6 V2 Q8 1 9 1 H19 Q20 1 20 2 V6" stroke-dasharray="2 1.6"/></svg>
<svg class="a" style="left:1830px;top:988px" width="21" height="16" viewBox="0 0 21 16" fill="none" stroke="#777" stroke-width="1.3"><rect x="1" y="1" width="19" height="14" rx="2"/><path d="M1 9 H7 M14 9 H20 M10.5 11.5 V4.5 M8 7 L10.5 4.5 L13 7"/></svg>

<!-- right sidebar -->
<svg class="a" style="left:1881px;top:104px" width="22" height="22" viewBox="0 0 22 22"><defs><linearGradient id="sg" x1="0" y1="0" x2="1" y2="1"><stop offset="0" stop-color="#e8f4fc"/><stop offset="1" stop-color="#a7d4f0"/></linearGradient></defs><circle cx="8.5" cy="8.5" r="6.5" fill="url(#sg)" stroke="#555" stroke-width="2.2"/><path d="M13.5 13.5 L19.5 19.5" stroke="#c03ae0" stroke-width="3.2" stroke-linecap="round"/></svg>
<svg class="a" style="left:1882px;top:155px" width="21" height="21" viewBox="0 0 21 21"><defs><linearGradient id="tg" x1="1" y1="0" x2="0" y2="1"><stop offset="0" stop-color="#5aa9f7"/><stop offset="1" stop-color="#3a3ae0"/></linearGradient></defs><path d="M11 1 H19 Q20.5 1 20.5 2.5 V10 L10 20.5 Q9 21.3 8 20.5 L0.8 13.3 Q0 12.3 0.8 11.3 Z" fill="url(#tg)"/><circle cx="16" cy="5.3" r="2" fill="#fff" stroke="#f5c518" stroke-width="1.4"/></svg>
<svg class="a" style="left:1881px;top:206px" width="23" height="19" viewBox="0 0 23 19"><path d="M7.5 5 V2.5 Q7.5 1 9 1 H14 Q15.5 1 15.5 2.5 V5" fill="none" stroke="#8a8a8a" stroke-width="1.6"/><rect x="0.5" y="5" width="22" height="13.5" rx="2" fill="#e0531f"/><rect x="0.5" y="5" width="22" height="5" rx="1.5" fill="#f06a2a"/><rect x="10" y="8.5" width="3" height="4" rx="0.8" fill="#ccc"/></svg>
<svg class="a" style="left:1878px;top:250px" width="30" height="30" viewBox="0 0 30 30"><defs><linearGradient id="rk" x1="0" y1="0" x2="1" y2="1"><stop offset="0" stop-color="#e08af8"/><stop offset="1" stop-color="#9a1cf0"/></linearGradient><linearGradient id="pw" x1="0" y1="0" x2="0.3" y2="1"><stop offset="0" stop-color="#8a8a8a"/><stop offset="1" stop-color="#2a2a2a"/></linearGradient></defs><path d="M16.3 4 H18.2 V5.8 H19.5 V4 H21.3 V5.8 H22.6 V4 H25 V7.5 L23.8 9 V15.5 Q24.5 17.5 25.9 18.5 V20.3 H16 V18.5 Q17.5 17.5 18.3 15.5 V9 L16.3 7.5 Z" fill="url(#rk)"/><circle cx="10.4" cy="10.2" r="4.2" fill="url(#pw)"/><rect x="5.3" y="14.6" width="10.3" height="2.2" rx="1.1" fill="#555"/><path d="M7.8 16.5 H13.2 Q13.5 20.5 16.5 22.5 Q17.8 23.5 17.6 25.5 Q17.4 26.8 16 26.8 H4.8 Q3.3 26.8 3.2 25.5 Q3 23.5 4.5 22.5 Q7.5 20.5 7.8 16.5 Z" fill="url(#pw)"/></svg>
<svg class="a" style="left:1878px;top:300px" width="30" height="30" viewBox="0 0 30 30"><defs><linearGradient id="m1" x1="0" y1="0" x2="1" y2="1"><stop offset="0" stop-color="#2f6fd8"/><stop offset="1" stop-color="#45e8f8"/></linearGradient><linearGradient id="m2" x1="0" y1="0" x2="0" y2="1"><stop offset="0" stop-color="#b878ec"/><stop offset="1" stop-color="#1a6ad8"/></linearGradient><linearGradient id="m3" x1="0" y1="0" x2="1" y2="0"><stop offset="0" stop-color="#d890f8"/><stop offset="1" stop-color="#7450b8"/></linearGradient></defs><path d="M11.2 6 Q14.5 3.8 17.8 5.6 L22.8 8.5 Q24.7 9.6 24.7 12 V17.5 L18.2 13.8 Q16 12.2 13.5 12.5 L11.2 12.8 Z" fill="url(#m1)"/><path d="M11.2 6 V12.8 Q10.8 15.5 11.5 17.5 Q12.5 19.5 14.2 19.2 L7.5 22.8 Q4.4 21.2 4.4 18 V11.8 Q4.4 9.8 6.5 8.6 Z" fill="url(#m2)"/><path d="M24.7 17.5 Q24.7 20.5 22.5 21.8 L17.5 24.8 Q14.5 26.6 11.5 25 L7.5 22.8 L14.5 19 Q17 17.8 17.8 15.5 Q18.2 14 18.2 13.8 Z" fill="url(#m3)"/><circle cx="14.4" cy="15.6" r="3.5" fill="#f7f7f7"/></svg>
<svg class="a" style="left:1882px;top:355px" width="22" height="21" viewBox="0 0 22 21"><path d="M7 1.5 H19.5 Q21 1.5 21 3 V18 Q21 19.5 19.5 19.5 H7 Z" fill="#28a8ea"/><path d="M7 9 L14 13 L21 9 V18 Q21 19.5 19.5 19.5 H7Z" fill="#0a5fb4"/><rect x="0.5" y="4.5" width="11.5" height="12" rx="1.2" fill="#0f78d4"/><ellipse cx="6.2" cy="10.5" rx="3" ry="3.5" fill="none" stroke="#fff" stroke-width="1.5"/></svg>
<svg class="a" style="left:1878px;top:400px" width="30" height="30" viewBox="0 0 30 30"><defs><linearGradient id="dz1" x1="0" y1="0" x2="1" y2="1"><stop offset="0" stop-color="#c080f8"/><stop offset="1" stop-color="#5038f0"/></linearGradient><linearGradient id="dz2" x1="1" y1="0" x2="0" y2="1"><stop offset="0" stop-color="#e070f0"/><stop offset="0.5" stop-color="#e8a8f0"/><stop offset="1" stop-color="#c040f0"/></linearGradient></defs><path d="M10.5 17 Q13 22.5 18 20 Q21.5 17.5 20 12 L22.5 11.5 Q25 19 21.5 23.5 Q17 27.8 11 26 Q7 24.5 6.5 21 Z" fill="url(#dz2)"/><path d="M14.8 4.2 L8 16.5" stroke="url(#dz1)" stroke-width="2.8" stroke-linecap="round"/><path d="M6 16 Q9.5 15 10.5 18 Q10.5 21.5 7.5 22.5 L4.5 23.8 Q3 19.5 3.5 18 Q4.3 16.5 6 16 Z" fill="url(#dz1)"/><path d="M19.5 6 L23 9.5 L19.5 13.5 L16 10 Z" fill="url(#dz1)"/><path d="M23.8 3.8 L25.8 5.8 L23.8 7.8 L21.8 5.8 Z" fill="#6a40f0"/></svg>
<svg class="a" style="left:1881px;top:457px" width="22" height="17" viewBox="0 0 22 17"><path d="M0.5 6 L21.5 0.5 L14.5 16.5 L9.5 9 Z" fill="#3a8ee6"/><path d="M0.5 6 L21.5 0.5 L9.5 9Z" fill="#58b4f0"/><path d="M9.5 9 L21.5 0.5 L11.5 16.5 Z" fill="#f0a818"/><path d="M9.5 9 L11.5 16.5 L14.5 16.5 Z" fill="#1e5fc0"/></svg>
<svg class="a" style="left:1883px;top:504px" width="19" height="24" viewBox="0 0 19 24"><rect x="7.8" y="15" width="3.4" height="8.5" fill="#f0a020"/><path d="M9.5 0.5 Q15 0.5 16 5.5 Q18.8 7.5 18.5 11.5 Q18 17.5 11 17.5 H8 Q0.8 17.5 0.5 11.5 Q0.2 7.5 3 5.5 Q4 0.5 9.5 0.5Z" fill="#1f9a3a"/><path d="M9.5 3.5 L11.5 6 L9.5 8.5 L7.5 6Z" fill="#f5d020"/></svg>
<div class="a" style="left:1875px;top:556px;width:35px;height:1px;background:#c8c8c8"></div>
<svg class="a" style="left:1883px;top:587px" width="17" height="17" viewBox="0 0 17 17"><path d="M8.5 0.5 V16.5 M0.5 8.5 H16.5" stroke="#222" stroke-width="1.3"/></svg>
<div class="a" style="left:1875px;top:964px;width:35px;height:1px;background:#bdbdbd"></div>
<svg class="a" style="left:1882px;top:982px" width="21" height="21" viewBox="0 0 21 21" fill="none" stroke="#1a1a1a" stroke-width="1.5" stroke-linejoin="round"><path d="M8.7 1 H12.3 L12.9 3.9 Q14 4.3 15 5.1 L17.8 4.1 L19.6 7.1 L17.4 9 Q17.6 10.5 17.4 12 L19.6 13.9 L17.8 16.9 L15 15.9 Q14 16.7 12.9 17.1 L12.3 20 H8.7 L8.1 17.1 Q7 16.7 6 15.9 L3.2 16.9 L1.4 13.9 L3.6 12 Q3.4 10.5 3.6 9 L1.4 7.1 L3.2 4.1 L6 5.1 Q7 4.3 8.1 3.9 Z"/><circle cx="10.5" cy="10.5" r="2.9"/></svg>
</body></html>
